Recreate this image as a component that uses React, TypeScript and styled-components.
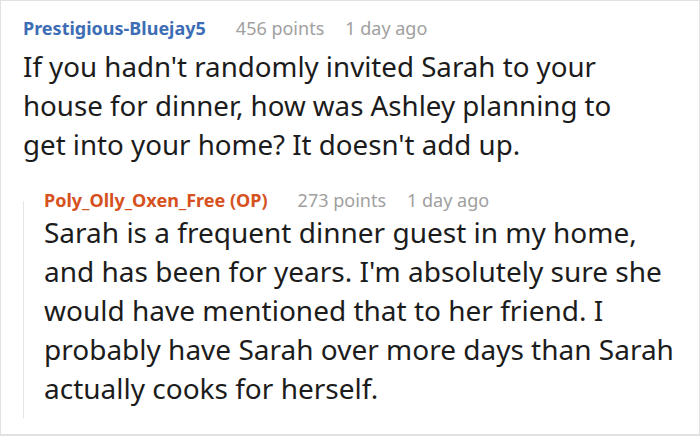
import styled, { createGlobalStyle } from "styled-components";

const GlobalStyle = createGlobalStyle`
  html, body {
    margin: 0;
    padding: 0;
    background: #ffffff;
  }
`;

interface IComment {
  author: string;
  points: number;
  age: string;
  text: string;
}

const comment: IComment = {
  author: "Prestigious-Bluejay5",
  points: 456,
  age: "1 day ago",
  text: "If you hadn't randomly invited Sarah to your house for dinner, how was Ashley planning to get into your home? It doesn't add up.",
};

const reply: IComment = {
  author: "Poly_Olly_Oxen_Free (OP)",
  points: 273,
  age: "1 day ago",
  text: "Sarah is a frequent dinner guest in my home, and has been for years. I'm absolutely sure she would have mentioned that to her friend. I probably have Sarah over more days than Sarah actually cooks for herself.",
};

export default function App() {
  return (
    <>
      <GlobalStyle />
      <Card>
        <Header>
          <Author $op={false}>{comment.author}</Author>
          <Meta>{comment.points} points</Meta>
          <Meta>{comment.age}</Meta>
        </Header>
        <Body>{comment.text}</Body>
        <Reply>
          <Header>
            <Author $op>{reply.author}</Author>
            <Meta>{reply.points} points</Meta>
            <Meta>{reply.age}</Meta>
          </Header>
          <ReplyBody>{reply.text}</ReplyBody>
        </Reply>
      </Card>
    </>
  );
}

const Card = styled.div`
  box-sizing: border-box;
  width: 700px;
  height: 436px;
  padding: 15px 0 0 22px;
  border: 1px solid #e2e2e2;
  border-bottom-width: 2px;
  font-family: "Noto Sans", "Open Sans", sans-serif;
  color: #1c1c1c;
  overflow: hidden;
`;

const Header = styled.div`
  display: flex;
  align-items: baseline;
  gap: 21px;
  height: 24px;
  font-size: 18px;
  line-height: 24px;
`;

const Author = styled.span<{ $op: boolean }>`
  margin-right: 9px;
  font-weight: 700;
  color: ${(p) => (p.$op ? "#d5521f" : "#3d6db4")};
`;

const Meta = styled.span`
  color: #a0a0a0;
`;

const Body = styled.p`
  width: 620px;
  margin: 7px 0 0;
  font-size: 27.7px;
  line-height: 39px;
`;

const Reply = styled.div`
  box-sizing: border-box;
  height: 230px;
  margin-top: 24px;
  padding: 0 0 0 21px;
  background: linear-gradient(#e4e4e4, #e4e4e4) no-repeat 0 13px / 1px calc(100% - 13px);
`;

const ReplyBody = styled.p`
  width: 634px;
  margin: 1px 0 0;
  font-size: 28px;
  line-height: 39px;
`;
